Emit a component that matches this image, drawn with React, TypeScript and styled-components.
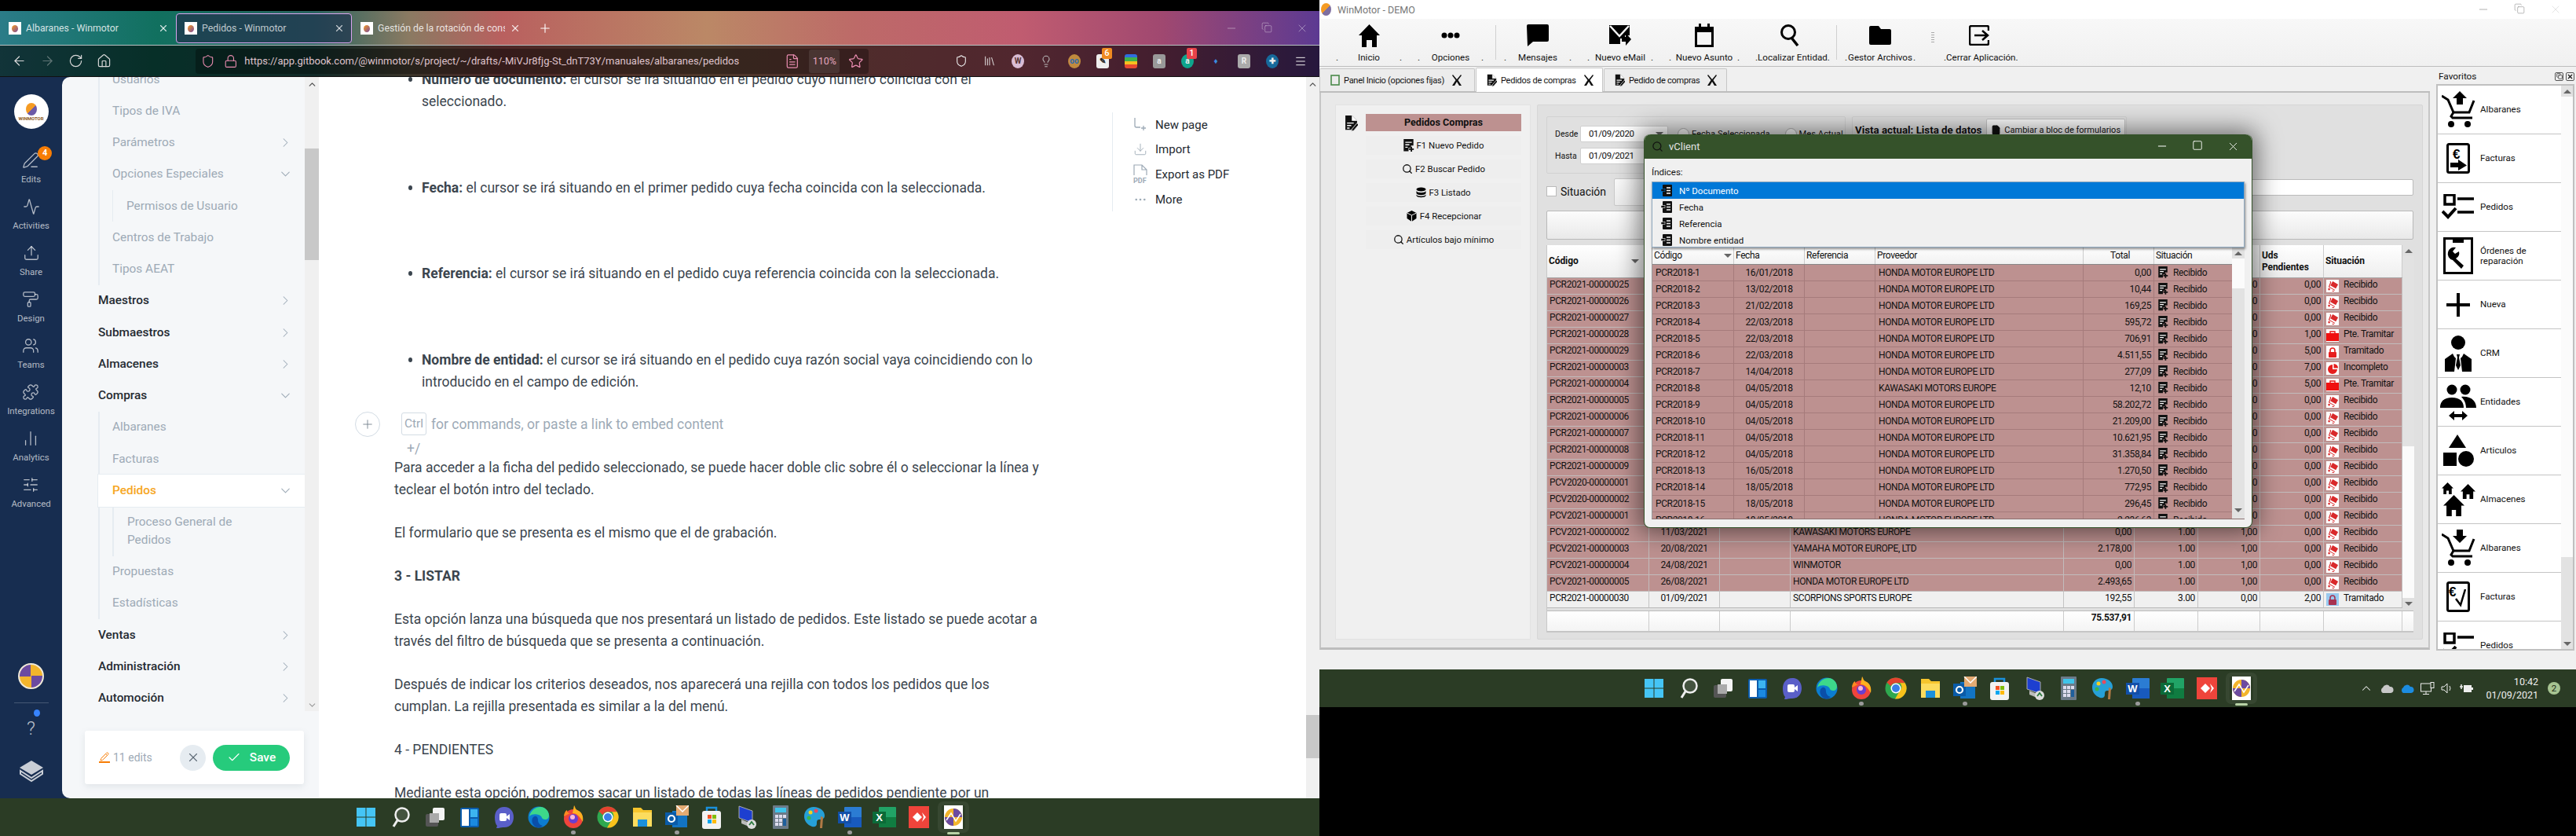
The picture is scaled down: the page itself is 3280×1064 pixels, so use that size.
import React from 'react';
import styled, { createGlobalStyle } from 'styled-components';
import {
  Activity, ArrowLeft, ArrowRight, BarChart2, Check, ChevronDown, ChevronRight, ChevronUp, Copy, Download, Ellipsis,
  FileText, Home, Library, Lightbulb, Lock, Menu, Minus, PaintRoller, Pencil, PenLine, Plus, Puzzle, RotateCw, Search,
  Shield, SlidersHorizontal, Square, Star, Upload, Users, X,
} from 'lucide-react';

const GlobalStyle = createGlobalStyle`
  html, body { margin: 0; padding: 0; background: #000; }
  * { box-sizing: border-box; }
`;

const WIN_FONT = `'Roboto', 'Liberation Sans', sans-serif`;

const Screen = styled.div`
  display: flex;
  width: 3280px;
  height: 1064px;
  overflow: hidden;
  background: #000;
  font-family: 'Roboto', sans-serif;
`;

/* ---------- left half: browser ---------- */

const BrowserSide = styled.div`
  display: flex;
  flex-direction: column;
  width: 1680px;
  height: 1064px;
  padding-top: 14px;
`;

const BrowserChrome = styled.div`
  flex: none;
  height: 84px;
  background: linear-gradient(90deg, #2b7c88 0, #11705f 200px, #2a6460 400px, #8a7a62 520px, #b9605f 640px, #bb8866 900px, #bd6a68 1090px, #c05c70 1300px, #a04870 1480px, #5c3a92 1680px);
`;

const TabRow = styled.div`
  display: flex;
  align-items: center;
  height: 44px;
  padding-top: 1px;
  border-bottom: 1px solid #b9c2c2;
`;

const BrowserTab = styled.div<{ $active?: boolean }>`
  display: flex;
  align-items: center;
  width: 224px;
  height: 38px;
  padding: 0 8px 0 10px;
  gap: 6px;
  border-radius: 4px;
  border: 1px solid ${(p) => (p.$active ? '#d9a4ee' : 'transparent')};
  background: ${(p) => (p.$active ? 'rgba(32, 52, 78, 0.72)' : 'transparent')};
  color: rgba(255, 255, 255, ${(p) => (p.$active ? 0.72 : 0.82)});
  font: 400 12.3px/18px 'Roboto', sans-serif;
`;

const TabTitle = styled.span`
  flex: 1;
  overflow: hidden;
  white-space: nowrap;
`;

const Favicon = styled.span`
  flex: none;
  display: flex;
  align-items: center;
  justify-content: center;
  width: 16px;
  height: 16px;
  background: #fff;
  &::after {
    content: '';
    width: 8px;
    height: 9px;
    border-radius: 50%;
    background: linear-gradient(135deg, #f59b23, #7a4a9c);
  }
`;

const NewTab = styled.span`
  display: flex;
  margin-left: 13px;
  color: #fff;
`;

const WinControls = styled.div`
  display: flex;
  gap: 30px;
  margin-left: auto;
  padding-right: 14px;
  color: rgba(255, 255, 255, 0.6);
`;

const NavBar = styled.div`
  display: flex;
  align-items: center;
  height: 40px;
  padding-left: 15px;
  background: rgba(0, 0, 0, 0.58);
  border-bottom: 1px solid #111;
  color: #d8d8d8;
`;

const NavButtons = styled.div`
  display: flex;
  gap: 17px;
  width: 234px;
`;

const UrlBar = styled.div`
  display: flex;
  align-items: center;
  width: 857px;
  height: 32px;
  padding: 0 6px 0 7px;
  gap: 11px;
  border-radius: 4px;
  background: rgba(0, 0, 0, 0.3);
  color: #e98cb0;
`;

const UrlText = styled.span`
  margin: 0 23px 0 -2px;
  width: 667px;
  white-space: nowrap;
  overflow: hidden;
  color: #dfc3cc;
  font: 400 13px 'Roboto', sans-serif;
`;

const ZoomChip = styled.span`
  width: 40px;
  height: 30px;
  margin-left: 1px;
  border-radius: 3px;
  background: rgba(255, 255, 255, 0.09);
  text-align: center;
  font: 400 12.5px/30px 'Roboto', sans-serif;
  color: #e4a5bd;
`;

const ExtRow = styled.div`
  display: flex;
  align-items: center;
  margin-left: 110px;
  gap: 20px;
`;

const Ext = styled.span<{ $bg?: string; $round?: boolean; $color?: string }>`
  position: relative;
  display: flex;
  align-items: center;
  justify-content: center;
  flex: none;
  width: 16px;
  height: 18px;
  border-radius: ${(p) => (p.$round ? '50%' : '3px')};
  background: ${(p) => p.$bg ?? 'transparent'};
  color: ${(p) => p.$color ?? '#eee'};
  font: 700 10px 'Roboto', sans-serif;
`;

const ExtBadge = styled.span<{ $bg: string }>`
  position: absolute;
  top: -8px;
  right: -4px;
  width: 13px;
  height: 14px;
  border-radius: 2px;
  background: ${(p) => p.$bg};
  color: #fff;
  text-align: center;
  font: 500 11px/14px 'Roboto', sans-serif;
`;

const BrowserBody = styled.div`
  display: flex;
  height: 918px;
  background: #172d50;
`;

const Rail = styled.nav`
  flex: none;
  display: flex;
  flex-direction: column;
  align-items: center;
  width: 79px;
  padding: 22px 0 20px;
`;

const RailLogo = styled.div`
  display: flex;
  flex-direction: column;
  align-items: center;
  justify-content: center;
  width: 44px;
  height: 44px;
  margin-bottom: 28px;
  border-radius: 50%;
  background: #fff;
  color: #8d5a21;
  font: 700 6px 'Roboto', sans-serif;
  &::before {
    content: '';
    width: 14px;
    height: 16px;
    border-radius: 50%;
    background: linear-gradient(135deg, #f59b23 50%, #6c5aa8 50%);
  }
`;

const RailItem = styled.div`
  position: relative;
  display: flex;
  flex-direction: column;
  align-items: center;
  height: 59px;
  padding-top: 1px;
  gap: 3px;
  color: rgba(255, 255, 255, 0.68);
  font: 400 11.4px/20px 'Roboto', sans-serif;
  white-space: nowrap;
`;

const RailBadge = styled.span`
  position: absolute;
  top: -6px;
  right: -14px;
  width: 18px;
  height: 18px;
  border-radius: 50%;
  background: #f77d05;
  color: #fff;
  text-align: center;
  font: 700 11px/18px 'Roboto', sans-serif;
`;

const RailAvatar = styled.div`
  width: 33px;
  height: 33px;
  margin-top: auto;
  border-radius: 50%;
  border: 2px solid #efe9d8;
  background: conic-gradient(#f3b52c 0 25%, #6c4ba0 25% 50%, #f3b52c 50% 75%, #6c4ba0 75%);
`;

const RailRule = styled.div`
  width: 44px;
  height: 1px;
  margin: 17px 0 16px;
  background: rgba(255, 255, 255, 0.2);
`;

const RailHelp = styled.div`
  position: relative;
  height: 34px;
  margin-bottom: 21px;
  color: rgba(255, 255, 255, 0.7);
  font: 300 24px/32px 'Roboto', sans-serif;
  &::after {
    content: '';
    position: absolute;
    top: -8px;
    right: -6px;
    width: 8px;
    height: 9px;
    border-radius: 50%;
    background: #3884ff;
  }
`;

const Sidebar = styled.aside`
  flex: none;
  display: flex;
  flex-direction: column;
  width: 327px;
  border-radius: 10px 0 0 10px;
  overflow: hidden;
  background: #f5f7f9;
`;

const SidebarScrollArea = styled.div`
  display: flex;
  height: 807px;
`;

const NavTree = styled.div`
  width: 309px;
  padding-left: 46px;
  overflow: hidden;
`;

const NavShift = styled.div`
  margin-top: -17px;
`;

const SubTree = styled.div<{ $thin?: boolean; $indent?: number }>`
  margin-left: ${(p) => p.$indent ?? 0}px;
  border-left: ${(p) => (p.$thin ? '1px' : '2px')} solid #e6ecf1;
`;

const NavRow = styled.div<{ $tone: 'main' | 'sub' | 'active'; $inset: number; $tall?: boolean }>`
  display: flex;
  align-items: center;
  justify-content: space-between;
  min-height: ${(p) => (p.$tall ? '63px' : '40.25px')};
  padding: 0 15px 0 ${(p) => p.$inset}px;
  font: ${(p) => (p.$tone === 'sub' ? 400 : 500)} 15.4px/23px 'Roboto', sans-serif;
  color: ${(p) => (p.$tone === 'main' ? '#242a31' : p.$tone === 'active' ? '#f6a623' : '#9daab6')};
  background: ${(p) => (p.$tone === 'active' ? '#fff' : 'transparent')};
  ${(p) => p.$tone === 'active' && 'box-shadow: 0 0 0 1px #e6ecf1; margin-left: -2px;'}
  svg { flex: none; color: #9daab6; }
`;

const ScrollTrack = styled.div<{ $w: number; $bg?: string }>`
  flex: none;
  display: flex;
  flex-direction: column;
  width: ${(p) => p.$w}px;
  background: ${(p) => p.$bg ?? '#f0f0f0'};
`;

const ScrollEnd = styled.div<{ $h?: number; $end?: boolean }>`
  flex: none;
  display: flex;
  align-items: center;
  justify-content: center;
  height: ${(p) => p.$h ?? 17}px;
  margin-top: ${(p) => (p.$end ? 'auto' : 0)};
`;

const ScrollPart = styled.div<{ $h: number; $bg: string }>`
  flex: none;
  height: ${(p) => p.$h}px;
  background: ${(p) => p.$bg};
`;

const Arrow = styled.span<{ $down?: boolean; $color?: string }>`
  flex: none;
  width: 0;
  height: 0;
  border-left: 5px solid transparent;
  border-right: 5px solid transparent;
  ${(p) => (p.$down ? `border-top: 5px solid ${p.$color ?? '#666'};` : `border-bottom: 5px solid ${p.$color ?? '#666'};`)}
`;

const SaveArea = styled.div`
  flex: 1;
  padding: 25px 19px 0 29px;
`;

const SaveBox = styled.div`
  display: flex;
  align-items: center;
  width: 279px;
  height: 68px;
  padding: 0 18px 0 18px;
  border-radius: 3px;
  background: #fff;
  box-shadow: 0 3px 8px rgba(116, 129, 141, 0.15);
`;

const EditCount = styled.span`
  display: flex;
  align-items: center;
  flex: 1;
  gap: 4px;
  color: #9daab6;
  font: 400 14px 'Roboto', sans-serif;
  svg { color: #f77d05; border-bottom: 2px solid #f77d05; }
`;

const CancelButton = styled.span`
  display: flex;
  align-items: center;
  justify-content: center;
  width: 33px;
  height: 33px;
  margin-right: 9px;
  border-radius: 50%;
  background: #e6ecf1;
  color: #5c6975;
`;

const SaveButton = styled.span`
  display: flex;
  align-items: center;
  justify-content: center;
  width: 98px;
  height: 33px;
  gap: 11px;
  border-radius: 17px;
  background: #26cb7c;
  color: #fff;
  font: 500 15.4px 'Roboto', sans-serif;
`;

const Doc = styled.main`
  flex: 1;
  display: flex;
  background: #fff;
`;

const Article = styled.article`
  width: 1010px;
  height: 918px;
  padding-left: 96px;
  overflow: hidden;
  color: #3b454e;
  font: 400 17.5px/28px 'Roboto', sans-serif;
`;

const ArticleShift = styled.div`
  margin-top: -11px;
  width: 830px;
`;

const Bullet = styled.div`
  position: relative;
  margin: 0 0 81.5px;
  padding-left: 35px;
  &::before {
    content: '';
    position: absolute;
    left: 18px;
    top: 11px;
    width: 5px;
    height: 6px;
    border-radius: 50%;
    background: #3b454e;
  }
  b { font-weight: 700; }
`;

const EditorHint = styled.div`
  display: flex;
  align-items: center;
  height: 28px;
  margin: -55.5px 0 0 -50px;
  color: #9daab6;
  white-space: nowrap;
`;

const PlusCircle = styled.span`
  display: flex;
  align-items: center;
  justify-content: center;
  flex: none;
  width: 32px;
  height: 32px;
  margin-right: 27px;
  border: 1px solid #d3dce4;
  border-radius: 50%;
  color: #74818d;
`;

const Kbd = styled.span`
  width: 32px;
  height: 29px;
  margin-right: 6px;
  border: 1px solid #d3dce4;
  border-radius: 3px;
  text-align: center;
  font: 400 15.4px/27px 'Roboto', sans-serif;
`;

const SlashHint = styled.div`
  height: 27px;
  margin-left: 16px;
  padding-top: 3px;
  color: #9daab6;
`;

const Para = styled.p<{ $first?: boolean }>`
  margin: ${(p) => (p.$first ? 0 : '27px')} 0 0;
  b { font-weight: 700; }
`;

const PageActions = styled.div`
  flex: none;
  width: 247px;
  height: 126px;
  margin-top: 45px;
  padding: 0 0 0 26px;
  border-left: 1px solid #e6ecf1;
`;

const ActionRow = styled.div`
  display: flex;
  align-items: center;
  height: 31.6px;
  gap: 10px;
  color: #242a31;
  font: 400 15px 'Roboto', sans-serif;
  svg { flex: none; color: #9daab6; }
`;

/* ---------- taskbar ---------- */

const Taskbar = styled.footer<{ $inset: number }>`
  flex: none;
  display: flex;
  align-items: center;
  height: 48px;
  padding-left: ${(p) => p.$inset}px;
  gap: 14px;
  background: #2b3c25;
`;

const TaskIcon = styled.span<{ $running?: boolean; $current?: boolean }>`
  position: relative;
  display: flex;
  flex: none;
  width: 30px;
  height: 30px;
  ${(p) => p.$current && 'outline: 5px solid rgba(255,255,255,0.06); border-radius: 2px;'}
  &::after {
    content: '';
    display: ${(p) => (p.$running || p.$current ? 'block' : 'none')};
    position: absolute;
    bottom: -7px;
    left: 50%;
    width: ${(p) => (p.$current ? '16px' : '6px')};
    height: ${(p) => (p.$current ? '3px' : '5px')};
    margin-left: ${(p) => (p.$current ? '-8px' : '-3px')};
    border-radius: 3px;
    background: ${(p) => (p.$current ? '#b7d1a5' : '#9a9a9a')};
  }
`;

const Tray = styled.div`
  display: flex;
  align-items: center;
  margin-left: auto;
  padding-right: 20px;
  gap: 8px;
  color: #eee;
`;

const Clock = styled.div`
  margin-left: 8px;
  text-align: right;
  color: #eee;
  font: 400 12.5px/17px ${WIN_FONT};
`;

const Notif = styled.span`
  width: 16px;
  height: 16px;
  margin-left: 4px;
  border-radius: 50%;
  background: #a7c492;
  color: #1c2a14;
  text-align: center;
  font: 400 11.5px/16px ${WIN_FONT};
`;

/* ---------- right half: WinMotor ---------- */

const DesktopSide = styled.div`
  position: relative;
  display: flex;
  flex-direction: column;
  width: 1600px;
`;

const AppWindow = styled.div`
  display: flex;
  flex-direction: column;
  height: 852px;
  background: #f0f0f0;
  font-family: ${WIN_FONT};
  color: #111;
`;

const AppTitle = styled.div`
  flex: none;
  display: flex;
  align-items: center;
  height: 24px;
  padding: 0 18px 0 2px;
  background: #fff;
  color: #777;
  font-size: 12.5px;
`;

const AppTitleIcon = styled.span`
  width: 13px;
  height: 16px;
  margin-right: 8px;
  border-radius: 50%;
  background: linear-gradient(135deg, #f59b23 50%, #7f6fa0 50%);
`;

const AppTitleButtons = styled.div`
  display: flex;
  gap: 31px;
  margin-left: auto;
  color: #888;
`;

const Ribbon = styled.div`
  flex: none;
  display: flex;
  height: 61px;
  padding-left: 11px;
  background: linear-gradient(#f8f8f8, #f0f0f0);
  border-bottom: 1px solid #bdbdbd;
`;

const RibbonItem = styled.div<{ $w: number }>`
  display: flex;
  flex-direction: column;
  align-items: center;
  flex: none;
  width: ${(p) => p.$w}px;
  padding-top: 4px;
`;

const RibbonIcon = styled.div`
  display: flex;
  align-items: center;
  justify-content: center;
  height: 34px;
`;

const RibbonLabel = styled.div`
  display: flex;
  justify-content: space-between;
  width: 100%;
  padding: 0 10px;
  margin-top: 3px;
  white-space: nowrap;
  font-size: 11.6px;
  line-height: 16px;
`;

const RibbonSep = styled.div`
  flex: none;
  width: 1px;
  height: 44px;
  margin: 8px 0 0 5px;
  background: #d0d0d0;
`;

const RibbonGrip = styled.div`
  flex: none;
  width: 4px;
  height: 16px;
  margin: 16px 2px 0 10px;
  background: radial-gradient(circle, #aaa 1px, transparent 1px) 0 0 / 2px 3px;
`;

const AppBody = styled.div`
  flex: 1;
  display: flex;
`;

const WorkColumn = styled.div`
  width: 1414px;
  display: flex;
  flex-direction: column;
`;

const DocTabs = styled.div`
  display: flex;
  align-items: flex-end;
  height: 33px;
  gap: 1px;
  border-bottom: 2px solid #bdbdbd;
`;

const DocTab = styled.div<{ $w: number; $active?: boolean }>`
  display: flex;
  align-items: center;
  flex: none;
  width: ${(p) => p.$w}px;
  height: ${(p) => (p.$active ? 31 : 29)}px;
  padding-left: 13px;
  gap: 5px;
  margin-bottom: ${(p) => (p.$active ? -1 : 0)}px;
  border: 1px solid #c6c6c6;
  border-bottom: none;
  border-radius: 2px 2px 0 0;
  background: ${(p) => (p.$active ? '#fff' : '#ececec')};
  font-size: 11px;
  letter-spacing: -0.25px;
  white-space: nowrap;
  svg { flex: none; }
`;

const TabLabel = styled.span<{ $w: number }>`
  flex: none;
  width: ${(p) => p.$w}px;
`;

const Frame = styled.div`
  display: flex;
  height: 709px;
  padding: 15px 10px 10px 18px;
  gap: 8px;
  background: #e9e9e9;
  border-right: 2px solid #c6c6c6;
  border-bottom: 3px solid #bdbdbd;
  border-left: 2px solid #c6c6c6;
`;

const ActionsPanel = styled.div`
  flex: none;
  display: flex;
  width: 249px;
  padding: 11px 11px 0 11px;
  gap: 6px;
  background: #f0f0f0;
  border: 1px solid #e2e2e2;
`;

const ActionsIcon = styled.div`
  flex: none;
  width: 21px;
  padding-top: 1px;
`;

const ActionsList = styled.div`
  flex: 1;
  display: flex;
  flex-direction: column;
  gap: 6px;
`;

const ActionsHead = styled.div`
  height: 22px;
  background: #bd9190;
  text-align: center;
  font: 700 12.6px/22px ${WIN_FONT};
`;

const ActionBtn = styled.div`
  display: flex;
  align-items: center;
  justify-content: center;
  height: 24px;
  gap: 3px;
  background: #eee;
  font-size: 11.4px;
`;

const Pane = styled.section`
  flex: 1;
  padding: 14px 11px 0 11px;
  background: #e0e0e0;
  border: 1px solid #d6d6d6;
  border-radius: 2px;
`;

const FilterRow = styled.div`
  display: flex;
  gap: 8px;
  height: 73px;
`;

const GroupBox = styled.div<{ $w: number }>`
  flex: none;
  width: ${(p) => p.$w}px;
  background: #e0e0e0;
  border: 1px solid #d2d2d2;
  border-radius: 2px;
`;

const DateGroup = styled.div`
  display: flex;
  height: 100%;
  padding: 11px 0 0 10px;
`;

const DateFields = styled.div`
  display: grid;
  grid-template-columns: 32px 112px;
  grid-auto-rows: 21px;
  row-gap: 7px;
  align-items: center;
  font-size: 10.5px;
`;

const DateInput = styled.div`
  display: flex;
  align-items: center;
  justify-content: space-between;
  height: 21px;
  padding: 0 5px 0 10px;
  background: #fff;
  border: 1px solid #cfcfcf;
  border-radius: 2px;
  font: 400 11.5px/19px ${WIN_FONT};
  letter-spacing: -0.35px;
`;

const Radio = styled.div<{ $gap: number }>`
  display: flex;
  align-items: center;
  height: 21px;
  margin-left: ${(p) => p.$gap}px;
  gap: 3px;
  font-size: 11.2px;
  white-space: nowrap;
  &::before {
    content: '';
    width: 13px;
    height: 13px;
    border: 1px solid #aaa;
    border-radius: 50%;
    background: #f5f5f5;
  }
`;

const ViewGroup = styled.div`
  display: flex;
  align-items: center;
  height: 32px;
  padding-left: 3px;
  gap: 6px;
`;

const ViewTitle = styled.b`
  font-size: 13.3px;
  white-space: nowrap;
`;

const ViewButton = styled.div`
  display: flex;
  align-items: center;
  height: 28px;
  padding: 0 5px;
  gap: 4px;
  background: #fafafa;
  border: 1px solid #c4c4c4;
  border-radius: 2px;
  font-size: 11px;
  white-space: nowrap;
`;

const SituationRow = styled.div`
  display: flex;
  align-items: flex-start;
  height: 35px;
  margin-top: 6px;
`;

const Checkbox = styled.span`
  flex: none;
  width: 13px;
  height: 13px;
  margin-top: 10px;
  background: #fff;
  border: 1px solid #bbb;
`;

const SituationLabel = styled.span`
  width: 68px;
  margin-left: 5px;
  font-size: 14px;
  line-height: 35px;
`;

const ShortBox = styled.div`
  flex: none;
  width: 400px;
  height: 35px;
  background: linear-gradient(#fafafa, #ececec);
  border: 1px solid #c9c9c9;
  border-radius: 2px;
`;

const SearchBox = styled.div`
  flex: 1;
  height: 21px;
  margin: 1px 0 0 8px;
  background: #fff;
  border: 1px solid #bbb;
  border-radius: 2px;
`;

const WideButton = styled.div`
  height: 37px;
  margin-top: 6px;
  background: linear-gradient(#fcfcfc, #e9e9e9);
  border: 1px solid #b9b9b9;
  border-radius: 2px;
`;

const MainGrid = styled.div`
  width: 1104px;
  margin-top: 7px;
  border-left: 1px solid #c8c8c8;
`;

const GridTop = styled.div`
  display: flex;
  height: 463px;
`;

const GridRows = styled.div<{ $w: number }>`
  flex: none;
  width: ${(p) => p.$w}px;
  overflow: hidden;
`;

const Row = styled.div<{ $h?: number; $bg?: string; $line?: string }>`
  display: flex;
  height: ${(p) => p.$h ?? 21}px;
  background: ${(p) => p.$bg ?? '#bd9190'};
  border-bottom: 1px solid ${(p) => p.$line ?? '#c2bcbc'};
`;

const Cell = styled.div<{ $w: number; $align?: string; $line?: string; $pad?: number; $bold?: boolean; $center?: boolean }>`
  display: flex;
  flex: none;
  gap: 6px;
  align-items: ${(p) => (p.$center ? 'center' : 'flex-start')};
  justify-content: ${(p) => p.$align ?? 'flex-start'};
  width: ${(p) => p.$w}px;
  padding: 0 ${(p) => p.$pad ?? 3}px;
  border-right: 1px solid ${(p) => p.$line ?? '#c2bcbc'};
  font-weight: ${(p) => (p.$bold ? 700 : 400)};
  font-size: 12px;
  line-height: 17px;
  letter-spacing: -0.38px;
  white-space: nowrap;
  overflow: hidden;
`;

const HeadCell = styled.div<{ $w: number }>`
  flex: none;
  display: flex;
  align-items: center;
  justify-content: space-between;
  width: ${(p) => p.$w}px;
  padding: 0 12px 0 2px;
  border-right: 1px solid #ccc;
  font: 700 12px/15px ${WIN_FONT};
  letter-spacing: -0.1px;
`;

const StatusGlyph = styled.span<{ $bg?: string }>`
  display: flex;
  flex: none;
  align-items: center;
  justify-content: center;
  width: 16px;
  height: 16px;
  margin-top: 2px;
  background: ${(p) => p.$bg ?? '#fff'};
`;

const Totals = styled.div`
  display: flex;
  height: 28px;
  margin-top: 2px;
  background: linear-gradient(#fff, #f4f4f4);
  border-top: 1px solid #bbb;
  border-bottom: 2px solid #c6c6c6;
`;

const Favorites = styled.div`
  flex: none;
  display: flex;
  flex-direction: column;
  width: 176px;
  margin-left: 8px;
`;

const FavHead = styled.div`
  display: flex;
  align-items: center;
  justify-content: space-between;
  height: 22px;
  padding: 2px 0 0 3px;
  font-size: 11.8px;
`;

const FavButtons = styled.div`
  display: flex;
  gap: 3px;
`;

const FavButton = styled.span`
  display: flex;
  align-items: center;
  justify-content: center;
  width: 11px;
  height: 11px;
  border: 1px solid #555;
  border-radius: 2px;
`;

const FavBox = styled.div`
  display: flex;
  height: 721px;
  border: 2px solid #c0c0c0;
`;

const FavList = styled.div`
  flex: 1;
  overflow: hidden;
  background: #fff;
`;

const FavItem = styled.div`
  display: flex;
  align-items: center;
  height: 62px;
  padding-left: 2px;
  border-bottom: 1px solid #c4c4c4;
  font-size: 11.6px;
  line-height: 13px;
`;

const FavIcon = styled.div`
  flex: none;
  display: flex;
  align-items: center;
  justify-content: center;
  width: 48px;
  height: 50px;
  margin-right: 4px;
`;

/* modal sits over the main grid */
const Modal = styled.div`
  position: absolute;
  left: 413px;
  top: 171px;
  display: flex;
  flex-direction: column;
  width: 775px;
  height: 501px;
  border: 1px solid #35522a;
  border-top: none;
  border-radius: 8px;
  background: #f0f0f0;
  box-shadow: 0 0 30px 6px rgba(0, 0, 0, 0.5);
  font-family: ${WIN_FONT};
  color: #111;
`;

const ModalTitle = styled.div`
  flex: none;
  display: flex;
  align-items: center;
  height: 31px;
  padding: 0 15px 0 9px;
  gap: 7px;
  background: #35522a;
  border-radius: 8px 8px 0 0;
  color: #e4e4e4;
  font-size: 13px;
`;

const ModalButtons = styled.div`
  display: flex;
  gap: 30px;
  margin-left: auto;
  color: #fff;
`;

const ModalBody = styled.div`
  padding: 0 9px;
`;

const IndexCaption = styled.div`
  height: 29px;
  font-size: 11.5px;
  line-height: 34px;
`;

const IndexList = styled.ul`
  position: relative;
  z-index: 1;
  height: 84px;
  margin: 0;
  padding: 0;
  list-style: none;
  border: 1px solid #8fa9c0;
  background: #f0f0f0;
  box-shadow: 1px 2px 3px rgba(0, 0, 0, 0.45);
`;

const IndexItem = styled.li<{ $selected?: boolean }>`
  display: flex;
  align-items: center;
  height: 21px;
  padding-left: 11px;
  gap: 9px;
  background: ${(p) => (p.$selected ? '#0078d7' : 'transparent')};
  color: ${(p) => (p.$selected ? '#fff' : '#111')};
  font-size: 11.5px;
`;

const ModalGrid = styled.div`
  display: flex;
  width: 755px;
  height: 346px;
  overflow: hidden;
  border-left: 1px solid #999;
  border-bottom: 1px solid #8a6f6f;
`;

const ModalHead = styled.div`
  display: flex;
  height: 22px;
  background: linear-gradient(#fdfdfd, #f2f2f2);
  border-bottom: 1px solid #888;
`;

/* ---------- icons ---------- */

const WinX = () => (
  <svg width="14" height="16" viewBox="0 0 14 16">
    <path d="M2 1l5 6 5-6 1 1-4.500 6L13 15h-3L7 10l-3 5H1l4.500-7L1 2z" fill="#111" />
  </svg>
);

const DocPen = ({ size = 13 }: { size?: number }) => (
  <svg width={size} height={size * 1.25} viewBox="0 0 16 20">
    <path d="M1 1h8l6 6v4l-7 7H1z" fill="#111" />
    <path d="M9 1v6h6" fill="#fff" stroke="#fff" strokeWidth="0.6" />
    <path d="M3 10h8M3 13h5M3 16h3" stroke="#fff" strokeWidth="1.3" />
    <path d="M15 10l2 2-6 7-3 1 1-3z" fill="#111" stroke="#f0f0f0" strokeWidth="0.8" />
  </svg>
);

const NewDoc = ({ size = 13 }: { size?: number }) => (
  <svg width={size} height={size * 1.18} viewBox="0 0 13 16">
    <path d="M0 0h12v8H9v3H6v4H0z" fill="#111" />
    <path d="M2 4h8M2 7h5M2 10h3" stroke="#fff" strokeWidth="1.3" />
    <path d="M9.500 9.500v6M6.500 12.500h6" stroke="#111" strokeWidth="1.8" />
  </svg>
);

const TreeGlyph = ({ light }: { light?: boolean }) => (
  <svg width="14" height="15" viewBox="0 0 14 15">
    <rect x="2" y="0" width="12" height="15" rx="1" fill="#111" />
    <path d="M7 4h5M7 7.500h5M7 11h5" stroke={light ? '#fff' : '#f0f0f0'} strokeWidth="1.4" />
    <rect x="0" y="5.500" width="5" height="3" fill="#111" stroke={light ? '#0078d7' : '#f0f0f0'} strokeWidth="0.6" />
  </svg>
);

const RedCart = () => (
  <svg width="13" height="13" viewBox="0 0 13 13">
    <g transform="rotate(30 6.500 6.500)" fill="#d9292b">
      <rect x="3" y="1" width="8" height="6" />
      <path d="M0 2l2 1 1 6h8v1H2L1 4 0 3z" />
      <circle cx="4" cy="12" r="1.300" />
      <circle cx="10" cy="12" r="1.300" />
    </g>
  </svg>
);

const RedCase = () => (
  <svg width="16" height="13" viewBox="0 0 16 13">
    <path d="M5 3V1h6v2" fill="none" stroke="#e61414" strokeWidth="1.400" />
    <rect x="0" y="3" width="16" height="10" fill="#f01010" />
  </svg>
);

const RedLock = ({ color = '#e61e1e' }: { color?: string }) => (
  <svg width="12" height="13" viewBox="0 0 12 13">
    <path d="M3 6V4a3 3 0 0 1 6 0v2" fill="none" stroke={color} strokeWidth="1.600" />
    <rect x="1" y="6" width="10" height="7" rx="1" fill={color} />
  </svg>
);

const RedPie = () => (
  <svg width="13" height="13" viewBox="0 0 13 13">
    <path d="M6 1v6h6a6 6 0 1 1-6-6z" fill="#e61e1e" />
    <path d="M7.500 0a5.500 5.500 0 0 1 5.500 5.500H7.500z" fill="#e61e1e" />
  </svg>
);

const STATUS_ICON: Record<string, React.ReactNode> = {
  Recibido: <RedCart />,
  'Pte. Tramitar': <RedCase />,
  Tramitado: <RedLock />,
  Incompleto: <RedPie />,
};

const CartFav = ({ down }: { down?: boolean }) => (
  <svg width="43" height="47" viewBox="0 0 43 47">
    <path d="M0 6l8 5 7 16h20l6-15M15 27l-3 5 2 2h25" fill="none" stroke="#000" strokeWidth="3" />
    <circle cx="12" cy="42" r="4" />
    <circle cx="33" cy="42" r="4" />
    {down ? <path d="M19 0h8v8h5l-9 9-9-9h5z" /> : <path d="M23 0l9 9h-5v8h-8V9h-5z" />}
  </svg>
);

const EuroFav = ({ check }: { check?: boolean }) => (
  <svg width="30" height="39" viewBox="0 0 30 39">
    <rect x="1.500" y="1.500" width="27" height="36" rx="2" fill="#fff" stroke="#000" strokeWidth="3" />
    <text x={check ? 3 : 8} y={check ? 19 : 20} fontSize="17" fontWeight="700" fontFamily="Liberation Sans, sans-serif">€</text>
    {check ? (
      <path d="M12 22l6 8 6-20" fill="none" stroke="#000" strokeWidth="2.500" />
    ) : (
      <path d="M5 25h10v-4l11 7.500L15 35v-4H5z" />
    )}
  </svg>
);

const CheckFav = () => (
  <svg width="42" height="34" viewBox="0 0 42 34">
    <rect x="4" y="1" width="12" height="12" fill="none" stroke="#000" strokeWidth="3.500" />
    <path d="M20 6h21M20 23h21" stroke="#000" strokeWidth="3.500" />
    <path d="M1 22l7 7 10-11" fill="none" stroke="#000" strokeWidth="4" />
  </svg>
);

const WrenchFav = () => (
  <svg width="38" height="47" viewBox="0 0 38 47">
    <path d="M1.500 1.500h35v44h-35z" fill="#fff" stroke="#000" strokeWidth="3" />
    <rect x="12" y="1" width="14" height="6" />
    <path d="M6 19a8 8 0 0 1 10-6l-4 5 3 3 5-3a8 8 0 0 1-4 9l10 9-3 4-11-11a8 8 0 0 1-6-10z" />
  </svg>
);

const PlusFav = () => (
  <svg width="30" height="30" viewBox="0 0 30 30">
    <path d="M15 0v30M0 15h30" stroke="#000" strokeWidth="4" />
  </svg>
);

const CrmFav = () => (
  <svg width="34" height="46" viewBox="0 0 34 46">
    <circle cx="17" cy="9" r="9" />
    <path d="M0 46V30l10-7 2 4 2 2-2 17zM34 46V30l-10-7-2 4-2 2 2 17zM15 24h4l-1 4 2 10-3 6-3-6 2-10z" />
  </svg>
);

const PeopleFav = () => (
  <svg width="46" height="46" viewBox="0 0 46 46">
    <circle cx="15" cy="7" r="6.500" />
    <circle cx="32" cy="7" r="6.500" />
    <path d="M0 30c0-9 6-13 15-13s15 4 15 13zM27 16c9-1 19 3 19 14H33c0-5-2-10-6-14z" />
    <path d="M11 40l7-6v4h10v-4l7 6-7 6v-4H18v4z" />
  </svg>
);

const ShapesFav = () => (
  <svg width="41" height="42" viewBox="0 0 41 42">
    <path d="M19 0l11 17H8z" />
    <rect x="1" y="23" width="17" height="17" />
    <circle cx="30" cy="31" r="10" />
  </svg>
);

const House = ({ x, y, s }: { x: number; y: number; s: number }) => (
  <g transform={`translate(${x} ${y}) scale(${s})`}>
    <path d="M10 0l10 10h-3v10h-5v-6H8v6H3V10H0z" />
  </g>
);

const HousesFav = () => (
  <svg width="44" height="44" viewBox="0 0 44 44">
    <House x={1} y={0} s={0.75} />
    <House x={25} y={2} s={0.95} />
    <House x={3} y={16} s={1.35} />
  </svg>
);

const HomeTool = () => (
  <svg width="27" height="29" viewBox="0 0 27 29">
    <path d="M13.500 0l13.500 14h-4v15h-6v-9h-7v9H4V14H0z" />
  </svg>
);

const ToolIcons: React.ReactNode[] = [
  <HomeTool key="home" />,
  <svg key="dots" width="24" height="8" viewBox="0 0 24 8"><circle cx="4" cy="4" r="3.500" /><circle cx="12" cy="4" r="3.500" /><circle cx="20" cy="4" r="3.500" /></svg>,
  <svg key="msg" width="28" height="28" viewBox="0 0 28 28"><path d="M2 0h24a2 2 0 0 1 2 2v18a2 2 0 0 1-2 2H8l-7 6-1-26a2 2 0 0 1 2-2z" /></svg>,
  <svg key="mail" width="28" height="26" viewBox="0 0 28 26"><path d="M0 0h26v13h-6v4h-6v7H0z" /><path d="M1 1l12 13L25 1" fill="none" stroke="#f4f4f4" strokeWidth="2.500" /><path d="M16 15h5v-5l7 8-7 8v-5h-5z" /></svg>,
  <svg key="cal" width="24" height="30" viewBox="0 0 24 30"><path d="M1.500 5.500h21v23h-21z" fill="none" stroke="#000" strokeWidth="3" /><path d="M0 4h24v7H0zM5 0h3v5H5zM16 0h3v5h-3z" /></svg>,
  <svg key="find" width="24" height="28" viewBox="0 0 24 28"><circle cx="10" cy="10" r="8.500" fill="none" stroke="#000" strokeWidth="3" /><path d="M14 17l8 10" stroke="#000" strokeWidth="3.500" /></svg>,
  <svg key="folder" width="28" height="24" viewBox="0 0 28 24"><path d="M2 0h10l3 4h11a2 2 0 0 1 2 2v16a2 2 0 0 1-2 2H2a2 2 0 0 1-2-2V2a2 2 0 0 1 2-2z" /></svg>,
  <svg key="exit" width="26" height="26" viewBox="0 0 26 26"><path d="M25 7V3a2 2 0 0 0-2-2H3a2 2 0 0 0-2 2v20a2 2 0 0 0 2 2h20a2 2 0 0 0 2-2v-4" fill="none" stroke="#000" strokeWidth="2.500" /><path d="M7 13h16M17 7l7 6-7 6" fill="none" stroke="#000" strokeWidth="2.500" /></svg>,
];

const TaskIcons: Record<string, React.ReactNode> = {
  start: <svg width="30" height="30" viewBox="0 0 30 30"><path d="M3 3h11.500v11.500H3zM15.500 3H27v11.500H15.500zM3 15.500h11.500V27H3zM15.500 15.500H27V27H15.500z" fill="#45c5f5" /></svg>,
  search: <svg width="30" height="30" viewBox="0 0 30 30"><circle cx="17" cy="12" r="8.500" fill="rgba(255,255,255,0.12)" stroke="#eee" strokeWidth="2.500" /><path d="M11 19l-5 8" stroke="#eee" strokeWidth="3" /></svg>,
  task: <svg width="30" height="30" viewBox="0 0 30 30"><rect x="3" y="11" width="16" height="16" rx="2" fill="#555" /><rect x="12" y="3" width="15" height="16" rx="2" fill="#f4f4f4" /><rect x="8" y="10" width="12" height="12" fill="#aaa" /></svg>,
  widgets: <svg width="30" height="30" viewBox="0 0 30 30"><rect x="3" y="3" width="24" height="25" rx="2" fill="#0b5cad" /><rect x="5" y="5" width="9" height="21" fill="#fff" /><rect x="16" y="5" width="9" height="10" fill="#3cb4f0" /><rect x="16" y="17" width="9" height="9" fill="#1b8ae0" /></svg>,
  chat: <svg width="30" height="30" viewBox="0 0 30 30"><path d="M15 2c8 0 12 6 12 13s-4 13-12 13c-2 0-5 0-7 1l-3 0 1-3C4 24 3 20 3 15 3 8 7 2 15 2z" fill="#5a5fc8" /><rect x="9" y="10" width="9" height="10" rx="2" fill="#fff" /><path d="M18 14l4-3v8l-4-3z" fill="#fff" /></svg>,
  edge: <svg width="30" height="30" viewBox="0 0 30 30"><circle cx="15" cy="15" r="13.500" fill="#0c7dd0" /><path d="M3 14C5 6 11 2 17 2c7 0 11 6 11 11 0 3-2 5-5 5-4 0-4-3-5-4-3-3-11-4-15 0z" fill="#3dd88a" /><path d="M12 28c-6-3-7-10-4-13 4-3 6 0 6 4 0 3 2 6 6 7-2 2-5 3-8 2z" fill="#0a4ea8" /></svg>,
  firefox: <svg width="30" height="30" viewBox="0 0 30 30"><circle cx="15" cy="17" r="12" fill="#f0443c" /><path d="M16 0c2 3 1 5 6 7 5 3 6 9 5 14-4-8-9-11-13-11z" fill="#ffb020" /><path d="M3 14c0-4 2-7 4-8 0 3 2 4 4 4-3 1-5 3-8 4z" fill="#ff8a20" /><circle cx="15" cy="17" r="6" fill="#6a3fd0" /><circle cx="14" cy="15" r="3" fill="#ffb8d8" /></svg>,
  chrome: <svg width="30" height="30" viewBox="0 0 30 30"><circle cx="15" cy="15" r="13.500" fill="#2fa84f" /><path d="M15 1.500a13.500 13.500 0 0 1 11.700 6.800H15a7 7 0 0 0-6.500 4L3.500 7.500A13.500 13.500 0 0 1 15 1.500z" fill="#e3432f" /><path d="M26.700 8.300A13.500 13.500 0 0 1 14 28.500L20 18a6 6 0 0 0 0-9.700z" fill="#f9c21b" /><circle cx="15" cy="15" r="6.500" fill="#fff" /><circle cx="15" cy="15" r="5" fill="#3a80e8" /></svg>,
  explorer: <svg width="30" height="30" viewBox="0 0 30 30"><path d="M3 3h10l3 3h11v21H3z" fill="#f6c52d" /><rect x="3" y="9" width="24" height="18" fill="#fcdc5e" /><rect x="9" y="18" width="12" height="9" fill="#1a90dc" /></svg>,
  outlook: <svg width="30" height="30" viewBox="0 0 30 30"><rect x="9" y="7" width="19" height="21" fill="#1274c4" /><rect x="0" y="9" width="16" height="16" fill="#0a5ba8" /><circle cx="8" cy="17" r="4" fill="none" stroke="#fff" strokeWidth="2.200" /><rect x="14" y="0" width="16" height="13" fill="#e3aa72" /><path d="M14 0l8 8 8-8" fill="none" stroke="#fff" strokeWidth="1.400" /></svg>,
  store: <svg width="30" height="30" viewBox="0 0 30 30"><path d="M9 8V3h12v5" fill="none" stroke="#1a90dc" strokeWidth="2.500" /><rect x="3" y="7" width="24" height="23" rx="3" fill="#f2f2f2" /><rect x="10" y="12" width="5" height="5" fill="#f35325" /><rect x="16" y="12" width="5" height="5" fill="#81bc06" /><rect x="10" y="18" width="5" height="5" fill="#05a6f0" /><rect x="16" y="18" width="5" height="5" fill="#ffba08" /></svg>,
  rdp: <svg width="30" height="30" viewBox="0 0 30 30"><path d="M6 1l17 6v15L6 16z" fill="#1d3fd0" stroke="#aaa" /><path d="M9 18l12 5v5l-12-5z" fill="#bbb" /><circle cx="22" cy="24" r="6" fill="#ddd" /><path d="M19 25l3-4 3 4" fill="none" stroke="#2b7a3d" strokeWidth="1.800" /></svg>,
  calc: <svg width="30" height="30" viewBox="0 0 30 30"><rect x="5" y="0" width="20" height="30" rx="1" fill="#6b7a88" /><rect x="8" y="3" width="14" height="6" fill="#3fc4ea" /><path d="M8 12h4v4H8zM13 12h4v4h-4zM18 12h4v4h-4zM8 17h4v4H8zM13 17h4v4h-4zM8 22h4v4H8zM13 22h4v4h-4z" fill="#dde" /><rect x="18" y="17" width="4" height="9" fill="#1e5f9c" /></svg>,
  paint: <svg width="30" height="30" viewBox="0 0 30 30"><path d="M13 2c8 0 14 5 14 11 0 5-5 5-7 5-3 0-3 3-3 5 0 4-3 5-6 4C5 25 1 20 1 14 1 7 6 2 13 2z" fill="#26a0d8" /><circle cx="9" cy="9" r="2.500" fill="#f5d020" /><circle cx="16" cy="7" r="2.500" fill="#e84a5f" /><circle cx="7" cy="16" r="2.500" fill="#3cb44b" /><path d="M22 14l3 1-1 14h-3z" fill="#b07a45" /></svg>,
  word: <svg width="30" height="30" viewBox="0 0 30 30"><rect x="8" y="2" width="22" height="26" rx="1" fill="#2b7cd3" /><rect x="8" y="15" width="22" height="13" fill="#185abd" /><rect x="0" y="8" width="17" height="15" fill="#124fa8" /><text x="8.500" y="20" fontSize="13" fontWeight="700" fill="#fff" textAnchor="middle" fontFamily="Liberation Sans, sans-serif">W</text></svg>,
  excel: <svg width="30" height="30" viewBox="0 0 30 30"><rect x="8" y="2" width="22" height="26" rx="1" fill="#21a366" /><rect x="8" y="15" width="22" height="13" fill="#107c41" /><rect x="0" y="8" width="17" height="15" fill="#0b6a38" /><text x="8.500" y="20" fontSize="13" fontWeight="700" fill="#fff" textAnchor="middle" fontFamily="Liberation Sans, sans-serif">X</text></svg>,
  anydesk: <svg width="30" height="30" viewBox="0 0 30 30"><rect x="2" y="1" width="26" height="28" fill="#ef443b" /><path d="M13 9l6 6-6 6-6-6z" fill="#fff" /><path d="M19 9l5 6-5 6 2-6z" fill="#fff" /></svg>,
  winmotor: <svg width="30" height="30" viewBox="0 0 30 30"><rect x="3" y="0" width="24" height="30" fill="#fff" /><circle cx="15" cy="15" r="11" fill="#f3b52c" /><path d="M15 4a11 11 0 0 1 11 11H15zM4 15a11 11 0 0 0 11 11V15z" fill="#6c4ba0" /><path d="M6 19l6-9 6 10 6-9" fill="none" stroke="#fff" strokeWidth="1.500" /></svg>,
};

/* ---------- data ---------- */

const TASKS = ['start', 'search', 'task', 'widgets', 'chat', 'edge', 'firefox', 'chrome', 'explorer', 'outlook', 'store', 'rdp', 'calc', 'paint', 'word', 'excel', 'anydesk', 'winmotor'];
const RUNNING = ['firefox', 'outlook', 'word'];

const RIBBON = [
  { w: 104, label: 'Inicio' },
  { w: 104, label: 'Opciones' },
  { w: 106, label: 'Mensajes', sep: true },
  { w: 104, label: 'Nuevo eMail' },
  { w: 110, label: 'Nuevo Asunto' },
  { w: 108, label: 'Localizar Entidad' },
  { w: 110, label: 'Gestor Archivos', sep: true },
  { w: 110, label: 'Cerrar Aplicación', grip: true },
];

const MAIN_COLS = [130, 90, 90, 348, 90, 81, 79, 81, 100];

type MainRow = { code: string; date?: string; vendor?: string; total?: string; qty?: string; rec?: string; pending: string; status: string };

const CODES = ['PCR2021-00000025', 'PCR2021-00000026', 'PCR2021-00000027', 'PCR2021-00000028', 'PCR2021-00000029', 'PCR2021-00000003', 'PCR2021-00000004', 'PCR2021-00000005', 'PCR2021-00000006', 'PCR2021-00000007', 'PCR2021-00000008', 'PCR2021-00000009', 'PCV2020-00000001', 'PCV2020-00000002', 'PCV2021-00000001'];
const PENDING = ['0,00', '0,00', '0,00', '1,00', '5,00', '7,00', '5,00'];
const STATUS = ['Recibido', 'Recibido', 'Recibido', 'Pte. Tramitar', 'Tramitado', 'Incompleto', 'Pte. Tramitar'];

const MAIN_ROWS: MainRow[] = [
  ...CODES.map((code, i) => ({ code, rec: '0,00', pending: PENDING[i] ?? '0,00', status: STATUS[i] ?? 'Recibido' })),
  { code: 'PCV2021-00000002', date: '11/03/2021', vendor: 'KAWASAKI MOTORS EUROPE', total: '0,00', qty: '1.00', rec: '1,00', pending: '0,00', status: 'Recibido' },
  { code: 'PCV2021-00000003', date: '20/08/2021', vendor: 'YAMAHA MOTOR EUROPE, LTD', total: '2.178,00', qty: '1.00', rec: '1,00', pending: '0,00', status: 'Recibido' },
  { code: 'PCV2021-00000004', date: '24/08/2021', vendor: 'WINMOTOR', total: '0,00', qty: '1.00', rec: '1,00', pending: '0,00', status: 'Recibido' },
  { code: 'PCV2021-00000005', date: '26/08/2021', vendor: 'HONDA MOTOR EUROPE LTD', total: '2.493,65', qty: '1.00', rec: '1,00', pending: '0,00', status: 'Recibido' },
];

const MODAL_COLS = [104, 90, 90, 265, 90, 100];
const HONDA = 'HONDA MOTOR EUROPE LTD';
const MODAL_ROWS: [string, string, string, string][] = [
  ['PCR2018-1', '16/01/2018', HONDA, '0,00'],
  ['PCR2018-2', '13/02/2018', HONDA, '10,44'],
  ['PCR2018-3', '21/02/2018', HONDA, '169,25'],
  ['PCR2018-4', '22/03/2018', HONDA, '595,72'],
  ['PCR2018-5', '22/03/2018', HONDA, '706,91'],
  ['PCR2018-6', '22/03/2018', HONDA, '4.511,55'],
  ['PCR2018-7', '14/04/2018', HONDA, '277,09'],
  ['PCR2018-8', '04/05/2018', 'KAWASAKI MOTORS EUROPE', '12,10'],
  ['PCR2018-9', '04/05/2018', HONDA, '58.202,72'],
  ['PCR2018-10', '04/05/2018', HONDA, '21.209,00'],
  ['PCR2018-11', '04/05/2018', HONDA, '10.621,95'],
  ['PCR2018-12', '04/05/2018', HONDA, '31.358,84'],
  ['PCR2018-13', '16/05/2018', HONDA, '1.270,50'],
  ['PCR2018-14', '18/05/2018', HONDA, '772,95'],
  ['PCR2018-15', '18/05/2018', HONDA, '296,45'],
  ['PCR2018-16', '18/05/2018', HONDA, '2.236,63'],
];

const FAVORITES: { label: React.ReactNode; icon: React.ReactNode }[] = [
  { label: 'Albaranes', icon: <CartFav /> },
  { label: 'Facturas', icon: <EuroFav /> },
  { label: 'Pedidos', icon: <CheckFav /> },
  { label: <>Órdenes de<br />reparación</>, icon: <WrenchFav /> },
  { label: 'Nueva', icon: <PlusFav /> },
  { label: 'CRM', icon: <CrmFav /> },
  { label: 'Entidades', icon: <PeopleFav /> },
  { label: 'Articulos', icon: <ShapesFav /> },
  { label: 'Almacenes', icon: <HousesFav /> },
  { label: 'Albaranes', icon: <CartFav down /> },
  { label: 'Facturas', icon: <EuroFav check /> },
  { label: 'Pedidos', icon: <CheckFav /> },
];

/* ---------- small parts ---------- */

const Chevron = ({ open }: { open?: boolean }) =>
  open ? <ChevronDown size={19} strokeWidth={1.3} /> : <ChevronRight size={19} strokeWidth={1.3} />;

const TaskList = () => (
  <>
    {TASKS.map((n) => (
      <TaskIcon key={n} $running={RUNNING.includes(n)} $current={n === 'winmotor'}>
        {TaskIcons[n]}
      </TaskIcon>
    ))}
  </>
);

function Browser() {
  return (
    <BrowserSide>
      <BrowserChrome>
        <TabRow>
          <BrowserTab><Favicon /><TabTitle>Albaranes - Winmotor</TabTitle><X size={14} /></BrowserTab>
          <BrowserTab $active><Favicon /><TabTitle>Pedidos - Winmotor</TabTitle><X size={14} /></BrowserTab>
          <BrowserTab><Favicon /><TabTitle>Gestión de la rotación de consu</TabTitle><X size={14} /></BrowserTab>
          <NewTab><Plus size={18} strokeWidth={1.5} /></NewTab>
          <WinControls><Minus size={16} strokeWidth={1} /><Copy size={14} strokeWidth={1} /><X size={16} strokeWidth={1} /></WinControls>
        </TabRow>
        <NavBar>
          <NavButtons>
            <ArrowLeft size={19} strokeWidth={1.5} />
            <ArrowRight size={19} strokeWidth={1.5} opacity={0.4} />
            <RotateCw size={19} strokeWidth={1.5} />
            <Home size={19} strokeWidth={1.5} />
          </NavButtons>
          <UrlBar>
            <Shield size={18} strokeWidth={1.5} />
            <Lock size={18} strokeWidth={1.5} />
            <UrlText>https://app.gitbook.com/@winmotor/s/project/~/drafts/-MiVJr8fjg-St_dnT73Y/manuales/albaranes/pedidos</UrlText>
            <FileText size={20} strokeWidth={1.5} />
            <ZoomChip>110%</ZoomChip>
            <Star size={20} strokeWidth={1.5} />
          </UrlBar>
          <ExtRow>
            <Ext><Shield size={17} strokeWidth={1.6} /></Ext>
            <Ext><Library size={17} strokeWidth={1.4} /></Ext>
            <Ext $bg="#d9bcd4" $round $color="#533">W</Ext>
            <Ext><Lightbulb size={18} strokeWidth={1.6} color="#bbb" /></Ext>
            <Ext $bg="#c08a3e" $round $color="#2e6ab0">oo</Ext>
            <Ext $bg="#eee" $color="#222"><ExtBadge $bg="#f08a20">6</ExtBadge>✎</Ext>
            <Ext $bg="linear-gradient(#2f6fe0 0 25%, #3fb44b 25% 50%, #f5c020 50% 75%, #e84a30 75%)" />
            <Ext $bg="#999">a</Ext>
            <Ext $bg="#0ea58c" $round><ExtBadge $bg="#e8424a">1</ExtBadge>a</Ext>
            <Ext $color="#3a8de0">♦</Ext>
            <Ext $bg="#aaa">R</Ext>
            <Ext $bg="#16699b" $round>✚</Ext>
            <Ext><Menu size={18} strokeWidth={1.5} /></Ext>
          </ExtRow>
        </NavBar>
      </BrowserChrome>
      <BrowserBody>
        <Rail>
          <RailLogo>WINMOTOR</RailLogo>
          <RailItem><PenLine size={22} strokeWidth={1.4} />Edits<RailBadge>4</RailBadge></RailItem>
          <RailItem><Activity size={22} strokeWidth={1.4} />Activities</RailItem>
          <RailItem><Upload size={22} strokeWidth={1.4} />Share</RailItem>
          <RailItem><PaintRoller size={22} strokeWidth={1.4} />Design</RailItem>
          <RailItem><Users size={22} strokeWidth={1.4} />Teams</RailItem>
          <RailItem><Puzzle size={22} strokeWidth={1.4} />Integrations</RailItem>
          <RailItem><BarChart2 size={22} strokeWidth={1.4} />Analytics</RailItem>
          <RailItem><SlidersHorizontal size={22} strokeWidth={1.4} />Advanced</RailItem>
          <RailAvatar />
          <RailRule />
          <RailHelp>?</RailHelp>
          <svg width="34" height="30" viewBox="0 0 34 30">
            <path d="M17 2l15 9-15 9-15-9z" fill="#c9ced6" />
            <path d="M3 15l14 9 14-9v4l-14 9-14-9z" fill="none" stroke="#c9ced6" strokeWidth="2" />
          </svg>
        </Rail>
        <Sidebar>
          <SidebarScrollArea>
            <NavTree>
              <NavShift>
                <SubTree>
                  <NavRow $tone="sub" $inset={16}>Usuarios</NavRow>
                  <NavRow $tone="sub" $inset={16}>Tipos de IVA</NavRow>
                  <NavRow $tone="sub" $inset={16}>Parámetros<Chevron /></NavRow>
                  <NavRow $tone="sub" $inset={16}>Opciones Especiales<Chevron open /></NavRow>
                  <SubTree $thin $indent={16}>
                    <NavRow $tone="sub" $inset={17}>Permisos de Usuario</NavRow>
                  </SubTree>
                  <NavRow $tone="sub" $inset={16}>Centros de Trabajo</NavRow>
                  <NavRow $tone="sub" $inset={16}>Tipos AEAT</NavRow>
                </SubTree>
                <NavRow $tone="main" $inset={0}>Maestros<Chevron /></NavRow>
                <NavRow $tone="main" $inset={0}>Submaestros<Chevron /></NavRow>
                <NavRow $tone="main" $inset={0}>Almacenes<Chevron /></NavRow>
                <NavRow $tone="main" $inset={0}>Compras<Chevron open /></NavRow>
                <SubTree>
                  <NavRow $tone="sub" $inset={16}>Albaranes</NavRow>
                  <NavRow $tone="sub" $inset={16}>Facturas</NavRow>
                  <NavRow $tone="active" $inset={18}>Pedidos<Chevron open /></NavRow>
                  <SubTree $indent={16}>
                    <NavRow $tone="sub" $inset={17} $tall><span>Proceso General de<br />Pedidos</span></NavRow>
                  </SubTree>
                  <NavRow $tone="sub" $inset={16}>Propuestas</NavRow>
                  <NavRow $tone="sub" $inset={16}>Estadísticas</NavRow>
                </SubTree>
                <NavRow $tone="main" $inset={0}>Ventas<Chevron /></NavRow>
                <NavRow $tone="main" $inset={0}>Administración<Chevron /></NavRow>
                <NavRow $tone="main" $inset={0}>Automoción<Chevron /></NavRow>
              </NavShift>
            </NavTree>
            <ScrollTrack $w={18}>
              <ScrollEnd $h={18}><ChevronUp size={13} strokeWidth={2.5} color="#555" /></ScrollEnd>
              <ScrollPart $h={73} $bg="transparent" />
              <ScrollPart $h={142} $bg="#c8c8c8" />
              <ScrollEnd $h={16} $end><ChevronDown size={13} strokeWidth={2} color="#999" /></ScrollEnd>
            </ScrollTrack>
          </SidebarScrollArea>
          <SaveArea>
            <SaveBox>
              <EditCount><Pencil size={14} strokeWidth={2} />11 edits</EditCount>
              <CancelButton><X size={18} strokeWidth={1.5} /></CancelButton>
              <SaveButton><Check size={18} strokeWidth={1.5} />Save</SaveButton>
            </SaveBox>
          </SaveArea>
        </Sidebar>
        <Doc>
          <Article>
            <ArticleShift>
              <Bullet><b>Número de documento:</b> el cursor se irá situando en el pedido cuyo número coincida con el seleccionado.</Bullet>
              <Bullet><b>Fecha:</b> el cursor se irá situando en el primer pedido cuya fecha coincida con la seleccionada.</Bullet>
              <Bullet><b>Referencia:</b> el cursor se irá situando en el pedido cuya referencia coincida con la seleccionada.</Bullet>
              <Bullet><b>Nombre de entidad:</b> el cursor se irá situando en el pedido cuya razón social vaya coincidiendo con lo introducido en el campo de edición.</Bullet>
              <EditorHint>
                <PlusCircle><Plus size={18} strokeWidth={1.2} /></PlusCircle>
                <Kbd>Ctrl</Kbd>
                for commands, or paste a link to embed content
              </EditorHint>
              <SlashHint>+/</SlashHint>
              <Para $first>Para acceder a la ficha del pedido seleccionado, se puede hacer doble clic sobre él o seleccionar la línea y teclear el botón intro del teclado.</Para>
              <Para>El formulario que se presenta es el mismo que el de grabación.</Para>
              <Para><b>3 - LISTAR</b></Para>
              <Para>Esta opción lanza una búsqueda que nos presentará un listado de pedidos. Este listado se puede acotar a través del filtro de búsqueda que se presenta a continuación.</Para>
              <Para>Después de indicar los criterios deseados, nos aparecerá una rejilla con todos los pedidos que los cumplan. La rejilla presentada es similar a la del menú.</Para>
              <Para>4 - PENDIENTES</Para>
              <Para>Mediante esta opción, podremos sacar un listado de todas las líneas de pedidos pendiente por un</Para>
            </ArticleShift>
          </Article>
          <PageActions>
            <ActionRow>
              <svg width="18" height="20" viewBox="0 0 18 20" fill="none" stroke="#9daab6" strokeWidth="1.3"><path d="M2 1v10q0 2 2 2h5M13 11v6M10 14h6" /></svg>
              New page
            </ActionRow>
            <ActionRow><Download size={18} strokeWidth={1.2} />Import</ActionRow>
            <ActionRow>
              <svg width="18" height="26" viewBox="0 0 18 26" fill="none" stroke="#9daab6" strokeWidth="1.2">
                <path d="M1 14V1h10l6 6v7M11 1v6h6" />
                <text x="0" y="24" fontSize="9" fontWeight="700" fill="#9daab6" stroke="none" fontFamily="Roboto, sans-serif">PDF</text>
              </svg>
              Export as PDF
            </ActionRow>
            <ActionRow><Ellipsis size={18} strokeWidth={1.6} />More</ActionRow>
          </PageActions>
          <ScrollTrack $w={17}>
            <ScrollEnd $h={18}><ChevronUp size={13} strokeWidth={2.5} color="#555" /></ScrollEnd>
            <ScrollPart $h={794} $bg="transparent" />
            <ScrollPart $h={55} $bg="#c8c8c8" />
          </ScrollTrack>
        </Doc>
      </BrowserBody>
      <Taskbar $inset={451}>
        <TaskList />
      </Taskbar>
    </BrowserSide>
  );
}

function MainTable() {
  return (
    <MainGrid>
      <GridTop>
        <GridRows $w={1089}>
          <Row $h={42} $bg="linear-gradient(#fff, #eee)" $line="#aaa">
            <HeadCell $w={MAIN_COLS[0]}>Código<Arrow $down /></HeadCell>
            {MAIN_COLS.slice(1, 7).map((w, i) => <HeadCell key={i} $w={w} />)}
            <HeadCell $w={MAIN_COLS[7]}><span>Uds<br />Pendientes</span></HeadCell>
            <HeadCell $w={MAIN_COLS[8]}>Situación</HeadCell>
          </Row>
          {MAIN_ROWS.map((r) => (
            <Row key={r.code}>
              <Cell $w={MAIN_COLS[0]}>{r.code}</Cell>
              <Cell $w={MAIN_COLS[1]} $align="center">{r.date}</Cell>
              <Cell $w={MAIN_COLS[2]} />
              <Cell $w={MAIN_COLS[3]}>{r.vendor}</Cell>
              <Cell $w={MAIN_COLS[4]} $align="flex-end">{r.total}</Cell>
              <Cell $w={MAIN_COLS[5]} $align="flex-end">{r.qty}</Cell>
              <Cell $w={MAIN_COLS[6]} $align="flex-end">{r.rec}</Cell>
              <Cell $w={MAIN_COLS[7]} $align="flex-end">{r.pending}</Cell>
              <Cell $w={MAIN_COLS[8]}><StatusGlyph>{STATUS_ICON[r.status]}</StatusGlyph>{r.status}</Cell>
            </Row>
          ))}
          <Row $bg="#f0f0f0" $line="#bbb">
            <Cell $w={MAIN_COLS[0]} $line="#c4c4c4">PCR2021-00000030</Cell>
            <Cell $w={MAIN_COLS[1]} $line="#c4c4c4" $align="center">01/09/2021</Cell>
            <Cell $w={MAIN_COLS[2]} $line="#c4c4c4" />
            <Cell $w={MAIN_COLS[3]} $line="#c4c4c4">SCORPIONS SPORTS EUROPE</Cell>
            <Cell $w={MAIN_COLS[4]} $line="#c4c4c4" $align="flex-end">192,55</Cell>
            <Cell $w={MAIN_COLS[5]} $line="#c4c4c4" $align="flex-end">3.00</Cell>
            <Cell $w={MAIN_COLS[6]} $line="#c4c4c4" $align="flex-end">0,00</Cell>
            <Cell $w={MAIN_COLS[7]} $line="#c4c4c4" $align="flex-end">2,00</Cell>
            <Cell $w={MAIN_COLS[8]} $line="#c4c4c4"><StatusGlyph $bg="#99c9ef"><RedLock color="#a83250" /></StatusGlyph>Tramitado</Cell>
          </Row>
        </GridRows>
        <ScrollTrack $w={15} $bg="#e0e0e0">
          <ScrollEnd $h={14}><Arrow /></ScrollEnd>
          <ScrollPart $h={242} $bg="#e2e2e2" />
          <ScrollPart $h={193} $bg="#fbfbfb" />
          <ScrollEnd $h={14}><Arrow $down /></ScrollEnd>
        </ScrollTrack>
      </GridTop>
      <Totals>
        {MAIN_COLS.map((w, i) => (
          <Cell key={i} $w={w} $line="#ccc" $bold $align="flex-end">{i === 4 ? '75.537,91' : ''}</Cell>
        ))}
      </Totals>
    </MainGrid>
  );
}

function ClientModal() {
  const headers = ['Código', 'Fecha', 'Referencia', 'Proveedor', 'Total', 'Situación'];
  return (
    <Modal>
      <ModalTitle>
        <Search size={15} strokeWidth={2} color="#111" />
        vClient
        <ModalButtons>
          <Minus size={16} strokeWidth={1.5} />
          <Square size={14} strokeWidth={1.5} />
          <X size={17} strokeWidth={1.2} />
        </ModalButtons>
      </ModalTitle>
      <ModalBody>
        <IndexCaption>Índices:</IndexCaption>
        <IndexList>
          <IndexItem $selected><TreeGlyph light />Nº Documento</IndexItem>
          <IndexItem><TreeGlyph />Fecha</IndexItem>
          <IndexItem><TreeGlyph />Referencia</IndexItem>
          <IndexItem><TreeGlyph />Nombre entidad</IndexItem>
        </IndexList>
        <ModalGrid>
          <GridRows $w={738}>
            <ModalHead>
              {headers.map((h, i) => (
                <Cell key={h} $w={MODAL_COLS[i]} $line="#ccc" $center $align={i === 4 ? 'flex-end' : i === 0 ? 'space-between' : 'flex-start'} $pad={i === 4 ? 30 : 2}>
                  {h}{i === 0 && <Arrow $down />}
                </Cell>
              ))}
            </ModalHead>
            {MODAL_ROWS.map(([code, date, vendor, total]) => (
              <Row key={code} $line="#a57b7b">
                <Cell $w={MODAL_COLS[0]} $line="#a57b7b" $pad={4} $center>{code}</Cell>
                <Cell $w={MODAL_COLS[1]} $line="#a57b7b" $center $align="center">{date}</Cell>
                <Cell $w={MODAL_COLS[2]} $line="#a57b7b" />
                <Cell $w={MODAL_COLS[3]} $line="#a57b7b" $pad={4} $center>{vendor}</Cell>
                <Cell $w={MODAL_COLS[4]} $line="#a57b7b" $center $align="flex-end">{total}</Cell>
                <Cell $w={MODAL_COLS[5]} $line="transparent" $center $pad={5}><NewDoc />Recibido</Cell>
              </Row>
            ))}
          </GridRows>
          <ScrollTrack $w={16} $bg="#e2e2e2">
            <ScrollEnd $h={14}><Arrow /></ScrollEnd>
            <ScrollPart $h={38} $bg="#fbfbfb" />
            <ScrollEnd $h={22} $end><Arrow $down /></ScrollEnd>
          </ScrollTrack>
        </ModalGrid>
      </ModalBody>
    </Modal>
  );
}

function WinMotor() {
  return (
    <DesktopSide>
      <AppWindow>
        <AppTitle>
          <AppTitleIcon />
          WinMotor - DEMO
          <AppTitleButtons>
            <Minus size={16} strokeWidth={1} />
            <Copy size={14} strokeWidth={1} />
            <X size={16} strokeWidth={0.8} color="#ccc" />
          </AppTitleButtons>
        </AppTitle>
        <Ribbon>
          {RIBBON.map((item, i) => (
            <React.Fragment key={item.label}>
              {item.sep && <RibbonSep />}
              {item.grip && <RibbonGrip />}
              <RibbonItem $w={item.w}>
                <RibbonIcon>{ToolIcons[i]}</RibbonIcon>
                <RibbonLabel><span>.</span><span>{item.label}</span><span>.</span></RibbonLabel>
              </RibbonItem>
            </React.Fragment>
          ))}
        </Ribbon>
        <AppBody>
          <WorkColumn>
            <DocTabs>
              <DocTab $w={198}>
                <svg width="12" height="14" viewBox="0 0 12 14" fill="none" stroke="#4a8a4a" strokeWidth="1.600"><rect x="1" y="1" width="10" height="12" /></svg>
                <TabLabel $w={132}>Panel Inicio (opciones fijas)</TabLabel><WinX />
              </DocTab>
              <DocTab $w={162} $active><DocPen /><TabLabel $w={100}>Pedidos de compras</TabLabel><WinX /></DocTab>
              <DocTab $w={157}><DocPen /><TabLabel $w={94}>Pedido de compras</TabLabel><WinX /></DocTab>
            </DocTabs>
            <Frame>
              <ActionsPanel>
                <ActionsIcon><DocPen size={17} /></ActionsIcon>
                <ActionsList>
                  <ActionsHead>Pedidos Compras</ActionsHead>
                  <ActionBtn><NewDoc size={14} /> F1 Nuevo Pedido</ActionBtn>
                  <ActionBtn><Search size={14} strokeWidth={2.2} /> F2 Buscar Pedido</ActionBtn>
                  <ActionBtn>
                    <svg width="13" height="14" viewBox="0 0 13 14"><ellipse cx="6.500" cy="3" rx="6" ry="2.500" /><path d="M.5 5c1 3 11 3 12 0v3c-1 3-11 3-12 0zM.5 9.500c1 3 11 3 12 0V11c-1 3-11 3-12 0z" /></svg>
                    F3 Listado
                  </ActionBtn>
                  <ActionBtn>
                    <svg width="15" height="14" viewBox="0 0 15 14"><path d="M7.500 0l6 3v7l-6 4-6-4V3z" /><path d="M1.500 3l6 3 6-3M7.500 6v8" stroke="#eee" fill="none" /></svg>
                    F4 Recepcionar
                  </ActionBtn>
                  <ActionBtn><Search size={14} strokeWidth={2.2} /> Artículos bajo mínimo</ActionBtn>
                </ActionsList>
              </ActionsPanel>
              <Pane>
                <FilterRow>
                  <GroupBox $w={381}>
                    <DateGroup>
                      <DateFields>
                        <span>Desde</span>
                        <DateInput>01/09/2020<Arrow $down /></DateInput>
                        <span>Hasta</span>
                        <DateInput>01/09/2021<Arrow $down /></DateInput>
                      </DateFields>
                      <Radio $gap={12}>Fecha Seleccionada</Radio>
                      <Radio $gap={19}>Mes Actual</Radio>
                    </DateGroup>
                  </GroupBox>
                  <GroupBox $w={350}>
                    <ViewGroup>
                      <ViewTitle>Vista actual: Lista de datos</ViewTitle>
                      <ViewButton><FileText size={13} fill="#111" color="#111" />Cambiar a bloc de formularios</ViewButton>
                    </ViewGroup>
                  </GroupBox>
                </FilterRow>
                <SituationRow>
                  <Checkbox />
                  <SituationLabel>Situación</SituationLabel>
                  <ShortBox />
                  <SearchBox />
                </SituationRow>
                <WideButton />
                <MainTable />
              </Pane>
            </Frame>
          </WorkColumn>
          <Favorites>
            <FavHead>
              Favoritos
              <FavButtons>
                <FavButton><Copy size={8} /></FavButton>
                <FavButton><X size={9} strokeWidth={3} /></FavButton>
              </FavButtons>
            </FavHead>
            <FavBox>
              <FavList>
                {FAVORITES.map((f, i) => (
                  <FavItem key={i}>
                    <FavIcon>{f.icon}</FavIcon>
                    <span>{f.label}</span>
                  </FavItem>
                ))}
              </FavList>
              <ScrollTrack $w={15} $bg="#e2e2e2">
                <ScrollEnd $h={14}><Arrow /></ScrollEnd>
                <ScrollPart $h={586} $bg="#fbfbfb" />
                <ScrollEnd $h={14} $end><Arrow $down /></ScrollEnd>
              </ScrollTrack>
            </FavBox>
          </Favorites>
        </AppBody>
      </AppWindow>
      <Taskbar $inset={411}>
        <TaskList />
        <Tray>
          <ChevronUp size={18} strokeWidth={1.4} />
          <svg width="18" height="12" viewBox="0 0 18 12"><path d="M4 12a4 4 0 0 1 0-7 5 5 0 0 1 9-1 4 4 0 0 1 1 8z" fill="#c8c8c8" /></svg>
          <svg width="18" height="12" viewBox="0 0 18 12"><path d="M4 12a4 4 0 0 1 0-7 5 5 0 0 1 9-1 4 4 0 0 1 1 8z" fill="#1c8ce0" /></svg>
          <svg width="18" height="17" viewBox="0 0 18 17" fill="none" stroke="#eee"><rect x="0.500" y="2" width="13" height="10" /><path d="M7 12v3M3 15.500h8" /><rect x="13" y="0.500" width="4" height="7" fill="#2b3c25" /></svg>
          <svg width="16" height="14" viewBox="0 0 16 14" fill="none" stroke="#eee"><path d="M1 5h3l4-4v12l-4-4H1zM11 4q2 3 0 6" /></svg>
          <svg width="17" height="12" viewBox="0 0 17 12"><rect x="5" y="2" width="10" height="9" fill="#eee" /><rect x="15" y="5" width="2" height="3" fill="#eee" /><path d="M0 4h4M2 1v6" stroke="#eee" strokeWidth="1.500" /></svg>
          <Clock>10:42<br />01/09/2021</Clock>
          <Notif>2</Notif>
        </Tray>
      </Taskbar>
      <ClientModal />
    </DesktopSide>
  );
}

export default function App() {
  return (
    <>
      <GlobalStyle />
      <Screen>
        <Browser />
        <WinMotor />
      </Screen>
    </>
  );
}
